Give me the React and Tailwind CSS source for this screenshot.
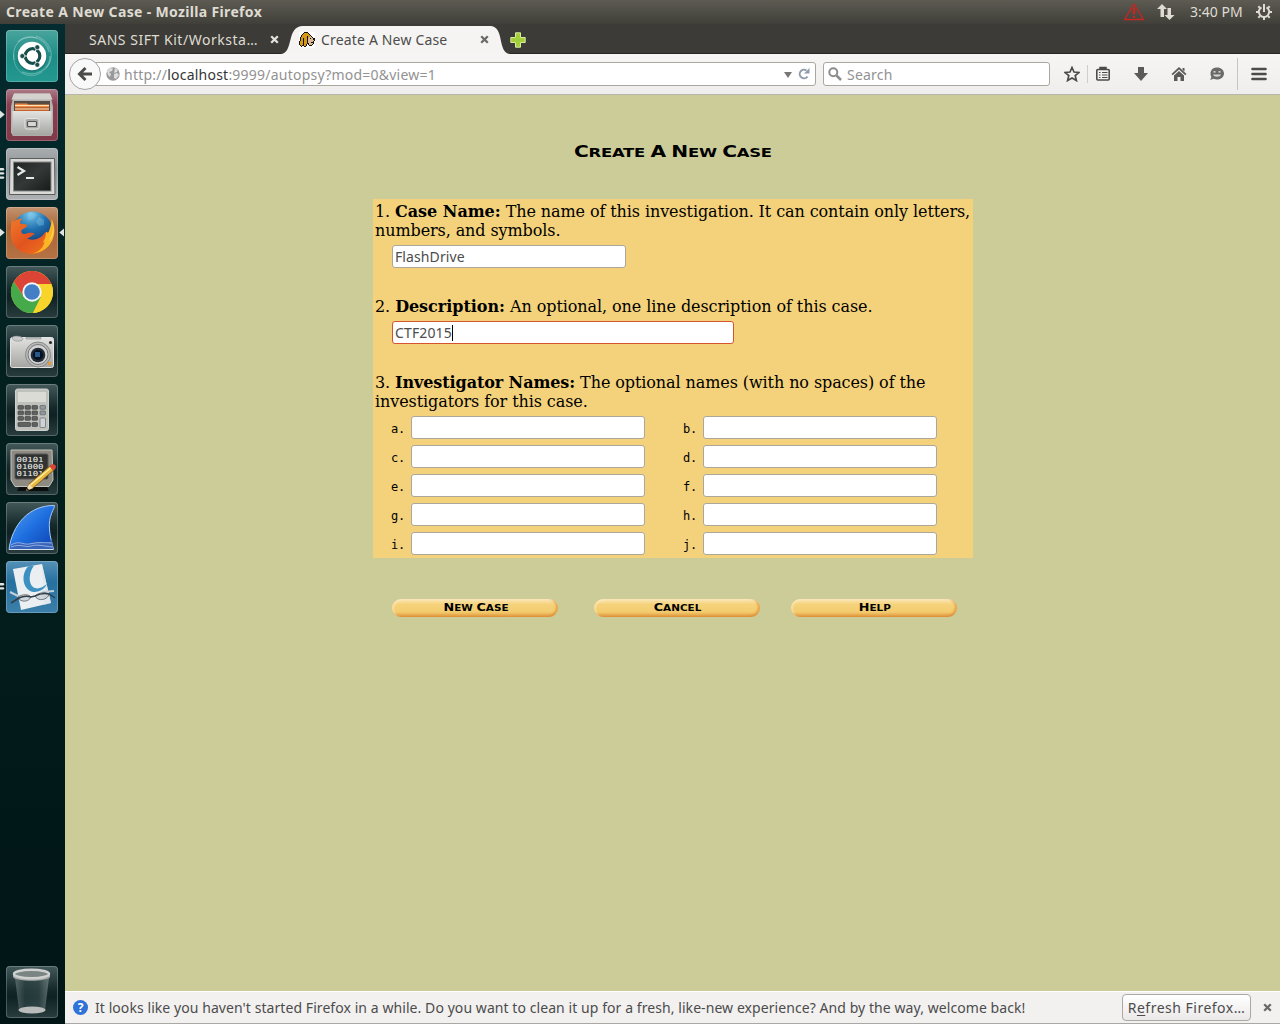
import React from "react";

const ui = "font-['Noto_Sans','Open_Sans',sans-serif]";

const darkTile = "bg-[linear-gradient(#43595a,#15292b_45%,#0e2224_60%,#2a3d3e)]";

function Tile({ bg, children, marks, right }) {
  return (
    <div className="relative flex h-[52px] w-full shrink-0 pl-[6px]">
      <div className={`h-[52px] w-[52px] overflow-hidden rounded-[4px] shadow-[inset_0_0_0_1px_rgba(255,255,255,0.22)] ${bg}`}>
        <svg viewBox="0 0 52 52" className="block h-[52px] w-[52px]">{children}</svg>
      </div>
      {marks && (
        <svg viewBox="0 0 5 20" className="absolute left-0 top-[16px] h-[20px] w-[5px]">
          {marks === 1 && <path d="M0 5.5L4.7 9.5L0 13.5z" fill="#dfe3e2" />}
          {marks === 2 && <path d="M0 6h3.500l1 1.200-1 1.200H0zM0 10.200h3.500l1 1.200-1 1.200H0z" fill="#dfe3e2" />}
          {marks === 3 && <path d="M0 4h3.500l1 1.200-1 1.200H0zM0 8.200h3.500l1 1.200-1 1.200H0zM0 12.400h3.500l1 1.200-1 1.200H0z" fill="#dfe3e2" />}
        </svg>
      )}
      {right && (
        <svg viewBox="0 0 5 20" className="absolute left-[59px] top-[16px] h-[20px] w-[5px]">
          <path d="M5 5.500L.3 9.500L5 13.500z" fill="#dfe3e2" />
        </svg>
      )}
    </div>
  );
}

function Launcher() {
  return (
    <aside className="flex w-[65px] shrink-0 flex-col gap-[7px] bg-[linear-gradient(#042b2f,#03201f_35%,#011516)] pb-[6px] pt-[6px]">
      <svg className="absolute h-0 w-0">
        <defs>
          <linearGradient id="metal" x1="0" y1="0" x2="0" y2="1"><stop offset="0" stopColor="#e2e2e0" /><stop offset="1" stopColor="#a4a4a1" /></linearGradient>
          <linearGradient id="screen" x1="0" y1="0" x2="1" y2="1"><stop offset="0" stopColor="#202423" /><stop offset=".5" stopColor="#343937" /><stop offset="1" stopColor="#171a19" /></linearGradient>
          <linearGradient id="fin" x1="0" y1="0" x2="1" y2="1"><stop offset="0" stopColor="#55a0f5" /><stop offset=".5" stopColor="#1f6fe0" /><stop offset="1" stopColor="#0b3fae" /></linearGradient>
          <linearGradient id="fox" x1="0" y1="0" x2="1" y2="1"><stop offset="0" stopColor="#f07a2a" /><stop offset=".5" stopColor="#e2531f" /><stop offset="1" stopColor="#f07a1c" /></linearGradient>
          <radialGradient id="globe" cx=".45" cy=".05" r=".85"><stop offset="0" stopColor="#7cc8ec" /><stop offset=".45" stopColor="#2172b0" /><stop offset="1" stopColor="#0d2f6b" /></radialGradient>
          <linearGradient id="bin" x1="0" y1="0" x2="1" y2="0"><stop offset="0" stopColor="#7b8a89" /><stop offset=".3" stopColor="#33494a" /><stop offset=".7" stopColor="#3e5354" /><stop offset="1" stopColor="#93a09f" /></linearGradient>
        </defs>
      </svg>
      <Tile bg="bg-[linear-gradient(#4aa59e,#1d8d86_50%,#249890)]">
        <g fill="none" stroke="#a9dbd5">
          <path d="M8 30C5 14 17 4 31 8" strokeWidth="1" opacity=".5" />
          <path d="M12 12C20 3 40 6 43 22" strokeWidth="1.500" opacity=".4" />
          <path d="M30 6C45 11 50 27 40 38" strokeWidth="1" opacity=".5" />
          <path d="M44 26C45 39 30 48 16 42" strokeWidth="1.500" opacity=".4" />
          <path d="M36 42C24 51 6 43 8 24" strokeWidth="1" opacity=".4" />
        </g>
        <circle cx="26" cy="27" r="15" fill="#14605c" opacity=".5" />
        <circle cx="26" cy="26" r="14.300" fill="#fff" />
        <circle cx="26.500" cy="26" r="7.300" fill="none" stroke="#174f4d" strokeWidth="3.200" />
        <path d="M26.500 26L16 26M26.500 26L31.500 17.300M26.500 26L31.500 34.700" stroke="#fff" strokeWidth="1" />
        <g fill="#174f4d" stroke="#fff" strokeWidth=".7"><circle cx="16.300" cy="26" r="2.500" /><circle cx="31.300" cy="17.200" r="2.500" /><circle cx="31.300" cy="34.800" r="2.500" /></g>
        <circle cx="26.500" cy="26" r="5.400" fill="#fff" />
      </Tile>
      <Tile marks={1} bg="bg-[linear-gradient(#ad7c88,#86404f_30%,#803a49)]">
        <path d="M8 4.500h36l3 13v26l-2 3.500H7l-2-3.500v-26z" fill="#b5b4b1" />
        <path d="M8 4.500h36l2.500 6h-41z" fill="#d3d2cf" />
        <path d="M8 12h36v11H8z" fill="#544b45" />
        <path d="M9 14.500h12l1 1h21v3H9z" fill="#f08a43" />
        <path d="M9 16.500h34" stroke="#ffe0b0" /><path d="M9 18.500h34v4H9z" fill="#c66228" /><path d="M9 20h34" stroke="#f7e2c7" />
        <path d="M6.500 22h39v24.500h-39z" fill="url(#metal)" />
        <rect x="19" y="29.500" width="14" height="10.500" rx="2" fill="#aaa9a6" stroke="#e6e6e4" />
        <rect x="21.500" y="32.500" width="9" height="5" rx="1" fill="#d8d7d4" stroke="#555" strokeWidth="1.200" />
      </Tile>
      <Tile marks={3} bg="bg-[linear-gradient(#a9adb0,#8e9497_40%,#aeb2b4)]">
        <path d="M4 10.500h44.500l.5 36H3.500z" fill="#d9dad8" stroke="#5b5d5c" />
        <rect x="7.500" y="14" width="37.500" height="29" fill="url(#screen)" stroke="#858785" />
        <path d="M11.500 19l6.500 4-6.500 4" fill="none" stroke="#e6e8e6" strokeWidth="2.200" />
        <path d="M20 30h8" stroke="#e6e8e6" strokeWidth="1.800" />
      </Tile>
      <Tile marks={1} right bg="bg-[linear-gradient(#c39470,#a86538_40%,#b47245)]">
        <circle cx="26.500" cy="25" r="20.500" fill="url(#globe)" />
        <path d="M22 7c4-2 8-1 9 1l-4 4-5 1zM33 10l5 3 0 5-5 1-3-4z" fill="#8acdec" opacity=".35" />
        <path d="M6.500 11c0 2 .5 3 1 4 2-2 5-3.500 9-3.500-2 1.500-2.500 3.500-2.500 5l7 1-.5 2.500-5 3c-.5 3 .5 4 3.500 4 4-1.500 7-2 10 0-3 1-4 3.500-8 4.500 7 3 14 0 18-6l8-1C47 38 38 47 26 47 13 47 4.700 37.500 4.700 26c0-5 .4-10 1.800-15z" fill="url(#fox)" />
        <path d="M45.500 12c3.500 6 4 14 1 21-4 8-11 13-20 13.500 7-2 11-6 12-12l-2 1c3-4 3.500-7 3.500-11l2 2c2-5 3.500-9 3.500-14.500z" fill="#fbb525" />
        <path d="M46 15c2 7 1 14-4 20 5-4 7-12 4-20z" fill="#fff3a2" />
      </Tile>
      <Tile bg={darkTile}>
        <circle cx="26" cy="26" r="21" fill="#f9d52b" />
        <path d="M7.800 15.500A21 21 0 0 0 27 47L35 31 18 31z" fill="#46aa4b" />
        <path d="M44.200 15.500A21 21 0 0 1 27 47L35 31 33 18h12.400z" fill="#f9d52b" />
        <path d="M7.800 15.500A21 21 0 0 1 45.400 18H26L18 31z" fill="#dc4436" />
        <circle cx="26" cy="26" r="9.700" fill="#f3f7fa" /><circle cx="26" cy="26" r="7.800" fill="#447fc5" />
      </Tile>
      <Tile bg={darkTile}>
        <rect x="4.500" y="12.500" width="43" height="30" rx="2" fill="url(#metal)" stroke="#e4e4e4" />
        <path d="M6 12.500c2-2 9-2 11 1l-1 2c-3 1-7 1-9-1zM20 12.500h15v1.500H20z" fill="#c8c9c9" stroke="#888" strokeWidth=".6" />
        <circle cx="32" cy="29.500" r="12.500" fill="#b8bab9" stroke="#888" /><circle cx="32" cy="29.500" r="10" fill="#d2d3d2" stroke="#777" /><circle cx="32" cy="30" r="7.300" fill="#222b38" /><circle cx="32" cy="30" r="5" fill="#05101d" />
        <path d="M29 27h5v5h-5z" fill="#28598c" /><circle cx="44.500" cy="17.500" r="1.500" fill="#252525" /><path d="M42 37h3v3h-3z" fill="#e19b32" />
      </Tile>
      <Tile bg={darkTile}>
        <rect x="9.500" y="5" width="33" height="41.500" rx="2" fill="#bfc1bd" stroke="#d0d1ce" />
        <rect x="12" y="8" width="28" height="10" fill="#dadbd5" />
        <g fill="#60625f" stroke="#383938" strokeWidth=".6">
          {[21.500, 27, 32.500].map((y) => [12, 19, 26].map((x) => <rect key={`${x}-${y}`} x={x} y={y} width="5.500" height="3.800" rx=".7" />))}
          <rect x="12" y="38.500" width="12.500" height="4" rx=".7" /><rect x="26" y="38.500" width="5.500" height="4" rx=".7" />
        </g>
        <g fill="#8f999f" stroke="#555" strokeWidth=".6"><rect x="34" y="21.500" width="5.500" height="3.800" rx=".7" /><rect x="34" y="27" width="5.500" height="3.800" rx=".7" /><rect x="34" y="34" width="5.500" height="9.500" rx=".7" fill="#cbd3d8" /></g>
      </Tile>
      <Tile bg={darkTile}>
        <path d="M14 42h26l3 6H11z" fill="#0b0d0d" />
        <path d="M5 7h41l1 30-4 6.500H9L5 37z" fill="#8d8a82" stroke="#c6c3ba" />
        <rect x="9" y="11" width="33" height="25" rx="1.500" fill="#303331" stroke="#555" />
        <g className="font-['DejaVu_Sans_Mono',monospace] text-[7px]" fill="#f3f5f3"><text x="10.500" y="19" textLength="27" lengthAdjust="spacingAndGlyphs">00101</text><text x="10.500" y="26" textLength="27" lengthAdjust="spacingAndGlyphs">01000</text><text x="10.500" y="33" textLength="27" lengthAdjust="spacingAndGlyphs">01101</text></g>
        <path d="M20 48l3-7 22-19 4 4-22 19z" fill="#e7b73f" stroke="#664614" strokeWidth=".7" /><path d="M24.500 42l22-18.500" stroke="#fff0ab" strokeWidth="1.200" /><path d="M43.500 23.500l3-2.500 3 1 .5 3-3 2.500z" fill="#db4437" /><path d="M20 48l3-7 4 4z" fill="#f4ddb0" /><path d="M20 48l1.300-3 1.700 1.700z" fill="#222" />
      </Tile>
      <Tile bg={darkTile}>
        <path d="M3 47.500C6 23 23 3 48.500 3.500C49 6 42 14 43.500 27c.5 9 3 15 4 20.500z" fill="url(#fin)" stroke="#a6cbf6" strokeWidth="1" />
        <path d="M6 43c6-5 11-1 16-1s7-4 13-2 8 0 11-2l1 9H4z" fill="#3863b9" /><g fill="none" stroke="#b9cff2" strokeWidth=".7"><path d="M5 43c8-5 12 0 18-1s9-2 23-1" /><path d="M5 45c10-4 14 1 20-1s12 0 22 1" /></g><path d="M3 47.500h44" stroke="#d5e0f0" strokeWidth="1" />
      </Tile>
      <Tile marks={2} bg="bg-[linear-gradient(#5591b8,#26709f_40%,#3b80aa)]">
        <path d="M7 8l29-5 9 39-30 7z" fill="#eceff1" /><path d="M36 3l9 39-7 2z" fill="#dce3e8" opacity=".6" />
        <path d="M22 5.500C14 14 17 30 28 31C35 31 39 27 41 23C36 27 31 29 27 26C22 22 23 11 28 4.500z" fill="#3d90c2" />
        <path d="M4 31l10 5M36 31l12-1" fill="none" stroke="#c3d0d8" strokeWidth="2" />
        <path d="M12 36c4-3 11-3 13 0-2 5-11 6-13 0zM29 35c4-4 11-4 14-2-1 6-11 8-14 2z" fill="#9aabb5" fillOpacity=".35" stroke="#4f5d66" strokeWidth=".8" />
        <path d="M5 42l8-5c4-2 9-2 12-1l4-1c4-2 10-3 14-2l6 4" fill="none" stroke="#333f47" strokeWidth="1.500" />
      </Tile>
      <div className="flex-1" />
      <Tile bg={darkTile}>
        <path d="M9 12h34l-4 32H13z" fill="url(#bin)" opacity=".55" />
        <ellipse cx="26" cy="44" rx="13.500" ry="3.500" fill="#b9bcbb" />
        <path d="M7 8v3c3 5 34 5 37 0V8z" fill="#a5a8a7" />
        <ellipse cx="25.500" cy="8" rx="17.500" ry="4.200" fill="#7a8483" stroke="#cfd1d0" strokeWidth="2.400" />
      </Tile>
    </aside>
  );
}

function TopBar() {
  return (
    <header className="flex h-6 shrink-0 items-center bg-[linear-gradient(#5d5b52,#403f39)] px-[6px] text-[#dfdbd2]">
      <span className="w-[300px] whitespace-nowrap pb-[2px] text-[14px] font-bold tracking-[0.34px]">Create A New Case - Mozilla Firefox</span>
      <div className="flex-1" />
      <svg viewBox="0 0 22 20" className="mr-[12px] h-[20px] w-[22px] fill-none stroke-[#c62720]"><path d="M11 2L20.500 17.500H1.500z" strokeWidth="1.300" /><path d="M11 5.500v7" strokeWidth="2.500" /><path d="M11 14v2" strokeWidth="2" /></svg>
      <svg viewBox="0 0 18 18" className="mr-[15px] h-[18px] w-[18px] fill-[#dfdbd2]"><path d="M5 1l5 5H7v8H3.500V6H0zM10.500 5H14v7h3.500l-5 5-5-5h3z" /></svg>
      <span className="w-[53px] whitespace-nowrap pb-[2px] text-[14px]">3:40 PM</span>
      <svg viewBox="0 0 18 18" className="ml-[12px] mr-[1px] h-[18px] w-[18px] shrink-0 fill-none stroke-[#dfdbd2]"><path d="M6.500 4.300a5.200 5.200 0 1 0 5 0" strokeWidth="2" /><path d="M9 1v8M1 9h2.500M14.500 9H17M3.300 3.300l1.600 1.600M14.700 3.300l-1.600 1.600M3.300 14.700l1.600-1.600M14.700 14.700l-1.600-1.600M9 14v3" strokeWidth="2" /></svg>
    </header>
  );
}

function Close({ className }) {
  return <svg viewBox="0 0 9 9" className={`h-[9px] w-[9px] shrink-0 fill-none ${className}`}><path d="M1.200 1.200l6.600 6.600M7.800 1.200L1.200 7.800" strokeWidth="2.300" /></svg>;
}

const houndRows = [
  ".....kkkk.......",
  "....kyyyyk......",
  "...kyyyyyyk.....",
  "..kyyyyyyyyk....",
  "..kyyyyykyypk...",
  ".kyyyyyykypppk..",
  ".kyykyyykppkppkk",
  ".kyykyyykpppppkk",
  ".kyykyyykppppppk",
  "kyyykyyykpppppk.",
  "kyyykyyykpppkkk.",
  "kyyykyyykkppppk.",
  "kyyykyyk.kpppk..",
  ".kykkyyk..kkk...",
  "..k..kk.........",
];
const houndColors = { k: "#17120a", y: "#d59b16", p: "#d9b999" };

function Hound() {
  return (
    <svg viewBox="0 0 16 16" className="h-4 w-4 shrink-0 bg-white" shapeRendering="crispEdges">
      {houndRows.flatMap((row, y) => [...row].map((c, x) => (c === "." ? null : <rect key={`${x}-${y}`} x={x} y={y} width="1" height="1" fill={houndColors[c]} />)))}
    </svg>
  );
}

function Tabs() {
  return (
    <div className="flex h-[30px] shrink-0 items-end bg-[#3c3b37] shadow-[inset_0_-1px_0_#272623]">
      <div className="flex h-[30px] w-[214px] items-center pl-6 text-[14px] text-[#dfdbd2]">
        <span className="w-[182px] whitespace-nowrap tracking-[0.53px]">SANS SIFT Kit/Worksta…</span>
        <Close className="stroke-[#e5e2dc]" />
      </div>
      <svg viewBox="0 0 22 28" className="ml-[2px] h-7 w-[22px]"><path d="M0 28C13 27 5 0 22 0V28z" fill="#f5f4f3" /></svg>
      <div className="-ml-px flex h-7 w-[189px] items-center bg-[#f5f4f3] pb-[2px] text-[14px] text-[#4c4c4c]">
        <span className="-ml-[3px] pt-px"><Hound /></span>
        <span className="ml-[6px] w-[159px] whitespace-nowrap tracking-[0.17px]">Create A New Case</span>
        <Close className="stroke-[#6b6a68]" />
      </div>
      <svg viewBox="0 0 20 28" className="-ml-px h-7 w-5"><path d="M0 0C15 0 7 27 20 28H0z" fill="#f5f4f3" /></svg>
      <svg viewBox="0 0 16 16" className="mb-[6px] h-4 w-4 fill-[#a4cf3b] stroke-[#d7eca0]"><path d="M5.500 .8h5v4.700h4.700v5h-4.700v4.700h-5v-4.700H.8v-5h4.700z" /></svg>
    </div>
  );
}

function Toolbar() {
  return (
    <div className="flex h-[41px] shrink-0 items-center border-b border-[#b8b5ad] bg-[linear-gradient(#f6f5f4,#f0eeed)] text-[14px] text-[#929292]">
      <div className="z-10 ml-1 flex h-8 w-8 shrink-0 items-center justify-center rounded-full border border-[#a0a4a9] bg-[#f9f9f9]">
        <svg viewBox="0 0 16 16" className="h-4 w-4 fill-none stroke-[#4b4b49]"><path d="M8.500 2L2.500 8l6 6M3 8h12" strokeWidth="3" /></svg>
      </div>
      <div className="-ml-[6px] flex h-6 w-[721px] items-center rounded-r-[3px] border border-[#aaa79f] bg-white pl-[10px]">
        <svg viewBox="0 0 14 14" className="h-[14px] w-[14px]"><circle cx="7" cy="7" r="6.700" fill="#999" /><path d="M1 4l3-3 3 .5-1 2.500-3 1 2 2-1 3-2-2zM9 1l3 2-1 2-3 1zM8 7l3-1 2 2-3 4-2-1z" fill="#ddd" /></svg>
        <span className="ml-1 whitespace-nowrap tracking-[0.23px]">http://<span className="text-[#353535]">localhost</span>:9999/autopsy?mod=0&amp;view=1</span>
        <div className="flex-1" />
        <svg viewBox="0 0 8 6" className="mr-[6px] mt-[2px] h-[6px] w-2"><path d="M0 0h8L4 6z" fill="#777" /></svg>
        <svg viewBox="0 0 12 12" className="mr-[5px] h-3 w-3"><path d="M9.500 8.500A4.300 4.300 0 1 1 8.500 2.500" fill="none" stroke="#909baa" strokeWidth="2" /><path d="M11.500 0v5.500H6z" fill="#909baa" /></svg>
      </div>
      <div className="ml-[7px] flex h-6 w-[227px] items-center rounded-[3px] border border-[#aaa79f] bg-white pl-1">
        <svg viewBox="0 0 14 14" className="h-[14px] w-[14px] fill-none stroke-[#8d8d8d]"><circle cx="5.300" cy="5.300" r="4" strokeWidth="2" /><path d="M8.500 8.500L13 13" strokeWidth="2.500" /></svg>
        <span className="ml-[5px] tracking-[0.2px]">Search</span>
      </div>
      <svg viewBox="0 0 16 16" className="ml-[14px] h-4 w-4 fill-none stroke-[#4b4b49]"><path d="M8 1.500l2 4.500 5 .4-3.800 3.200L12.400 14.500 8 11.900 3.600 14.500l1.200-4.900L1 6.400 6 6z" strokeWidth="1.700" /></svg>
      <div className="ml-[7px] h-[18px] w-px bg-[#cfcecb]" />
      <svg viewBox="0 0 16 16" className="ml-[7px] h-4 w-4 stroke-[#4b4b49]"><rect x="1.800" y="3.500" width="12.400" height="10.500" rx="1" fill="none" strokeWidth="1.600" /><path d="M5 3V1.500h6V3" fill="#4b4b49" strokeWidth="1.500" /><path d="M4 6.500h1.500M7 6.500h5.500M4 9h1.500M7 9h5.500M4 11.500h1.500M7 11.500h5.500" strokeWidth="1.100" /></svg>
      <svg viewBox="0 0 16 16" className="ml-[22px] h-4 w-4 fill-[#5a5a58]"><path d="M5 1h6v6h4l-7 8-7-8h4z" /></svg>
      <svg viewBox="0 0 16 16" className="ml-[22px] h-4 w-4 fill-[#5a5a58]"><path d="M8 1l7.500 7-1.200 1.200L8 3.500 1.700 9.200.5 8zM8 5l5 4.500V15H9.500v-4h-3v4H3V9.500zM11.500 2h2v3.500l-2-1.800z" /></svg>
      <svg viewBox="0 0 16 16" className="ml-[22px] h-4 w-4"><path d="M8 1.500c4 0 7 2.600 7 6s-3 6-7 6c-1.300 0-2.500-.2-3.500-.8L1.200 14l1.200-3C.7 8 1 1.500 8 1.500z" fill="#6a6a68" /><path d="M4.500 5.800h2M9.500 5.800h2" stroke="#eee" strokeWidth="1.200" /><path d="M4 8.500h8c-1 3-7 3-8 0z" fill="#d7d7d5" /></svg>
      <div className="ml-[12px] h-8 w-px bg-[#bfc6cc]" />
      <svg viewBox="0 0 16 14" className="ml-[13px] h-[14px] w-4 stroke-[#4b4b49]"><path d="M1.500 2h13M1.500 7h13M1.500 12h13" strokeWidth="2.600" strokeLinecap="round" /></svg>
    </div>
  );
}

function Field({ className, children }) {
  return <div className={`flex h-[23px] items-center rounded-[3px] border bg-white pl-[2px] text-[14px] leading-none text-[#4c4c4c] ${ui} ${className}`}>{children}</div>;
}

const copper = "font-['DejaVu_Sans',sans-serif] font-bold text-black whitespace-nowrap";

function ImageButton({ children, className }) {
  return (
    <button className={`flex h-[18px] w-[166px] items-center justify-center rounded-[9px] bg-[linear-gradient(#fbe7b8,#f5d27b_30%,#f3cc6e_72%,#e09640)] shadow-[inset_-2px_-1px_2px_rgba(221,134,45,0.6),inset_2px_1px_2px_rgba(255,240,200,0.5)] ${copper} text-[9px] ${className}`}>
      <span className="ml-[2px] scale-x-[1.16]">{children}</span>
    </button>
  );
}

function Page() {
  return (
    <main className="flex flex-1 flex-col items-start bg-[#cccc99] pl-[308px] font-['DejaVu_Serif',serif] text-[16px] leading-[19px] text-black">
      <h1 className={`ml-[201px] mt-[47px] h-[20px] origin-left scale-x-[1.262] leading-[20px] ${copper} text-[13px] tracking-[-0.2px]`}>
        <span className="text-[16px]">C</span>REATE <span className="text-[16px]">A</span> <span className="text-[16px]">N</span>EW <span className="text-[16px]">C</span>ASE
      </h1>
      <section className="mt-[37px] h-[359px] w-[600px] bg-[#f4d27b] pl-[2px] pt-[3px]">
        <p className="whitespace-nowrap tracking-[-0.095px]">1. <b className="tracking-[-0.03px]">Case Name:</b> The name of this investigation. It can contain only letters,<br />numbers, and symbols.</p>
        <Field className="ml-[17px] mt-[5px] w-[234px] border-[#aca79b]"><span className="tracking-[0.1px]">FlashDrive</span></Field>
        <p className="mt-[29px] tracking-[-0.08px]">2. <b className="tracking-[-0.03px]">Description:</b> An optional, one line description of this case.</p>
        <Field className="ml-[17px] mt-[5px] w-[342px] border-[#d2552d]"><span className="tracking-[0.14px]">CTF2015</span><span className="h-4 w-px bg-black" /></Field>
        <p className="mt-[29px] tracking-[-0.09px]">3. <b>Investigator Names:</b> The optional names (with no spaces) of the<br />investigators for this case.</p>
        <div className="ml-[16px] mt-[5px] grid grid-cols-[292px_292px] gap-y-[6px]">
          {"abcdefghij".split("").map((c) => (
            <div key={c} className="flex h-[23px] items-center font-['DejaVu_Sans_Mono',monospace] text-[12px]">
              <span className="w-5 pt-[4px] tracking-[-0.2px]">{c}.</span><Field className="w-[234px] border-[#aca79b]" />
            </div>
          ))}
        </div>
      </section>
      <div className="ml-[19px] mt-[41px] flex">
        <ImageButton><span className="text-[11px]">N</span>EW <span className="text-[11px]">C</span>ASE</ImageButton>
        <ImageButton className="ml-9"><span className="text-[11px]">C</span>ANCEL</ImageButton>
        <ImageButton className="ml-[31px]"><span className="text-[11px]">H</span>ELP</ImageButton>
      </div>
    </main>
  );
}

function Notice() {
  return (
    <footer className="flex h-[33px] shrink-0 items-center border-b border-t border-b-[#aaa8a4] border-t-white bg-[#f2f1f0] text-[14px] text-[#4c4c4c]">
      <div className="ml-[8px] flex h-[15px] w-[15px] items-center justify-center rounded-full bg-[#2f72d8] text-[12px] font-bold text-white">?</div>
      <span className="ml-[7px] w-[1027px] whitespace-nowrap tracking-[0.07px]">It looks like you haven't started Firefox in a while. Do you want to clean it up for a fresh, like-new experience? And by the way, welcome back!</span>
      <button className="h-[27px] w-[129px] shrink-0 whitespace-nowrap rounded-[4px] border border-[#aca8a1] bg-[linear-gradient(#fff,#ebe9e8)] tracking-[0.5px]">R<u className="underline-offset-2">e</u>fresh Firefox…</button>
      <Close className="ml-[12px] stroke-[#6b6a68]" />
    </footer>
  );
}

export default function App() {
  return (
    <div className={`flex h-[1024px] w-[1280px] flex-col overflow-hidden ${ui}`}>
      <TopBar />
      <div className="flex min-h-0 flex-1">
        <Launcher />
        <div className="flex w-[1215px] flex-col"><Tabs /><Toolbar /><Page /><Notice /></div>
      </div>
    </div>
  );
}
